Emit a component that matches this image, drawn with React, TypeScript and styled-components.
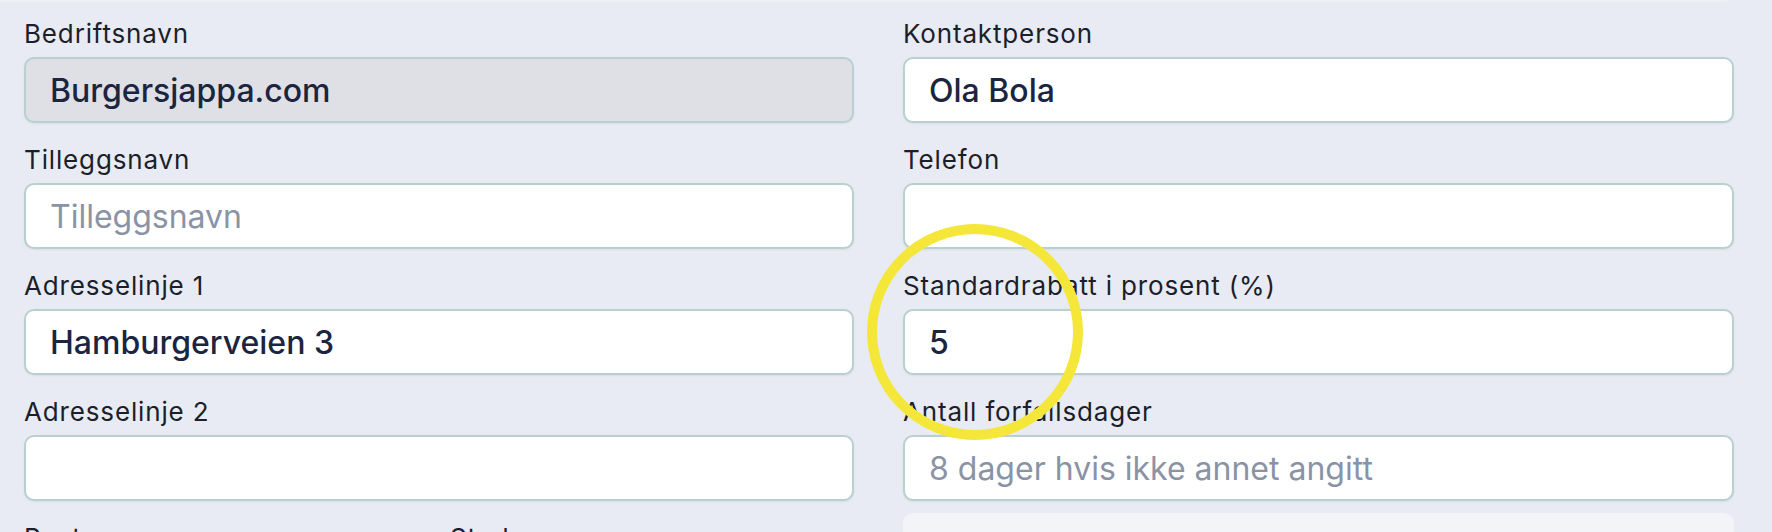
import React from "react";
import styled, { createGlobalStyle } from "styled-components";

const Global = createGlobalStyle`
  html, body { margin: 0; padding: 0; background: #e8ebf3; }
  body { font-family: Inter, "Noto Sans", sans-serif; overflow: hidden; }
`;

const Page = styled.div`
  position: relative;
  width: 1772px;
  height: 532px;
  overflow: hidden;
  background: #e8ebf3;
`;

const TopEdge = styled.div`
  height: 2px;
  margin-right: 45px;
  background: #eef0f6;
`;

const Form = styled.div`
  display: grid;
  grid-template-columns: 830px 831px;
  column-gap: 49px;
  padding: 14px 0 0 24px;
`;

const Column = styled.div`
  display: flex;
  flex-direction: column;
  gap: 19px;
`;

const Field = styled.label`
  display: flex;
  flex-direction: column;
  gap: 5px;
`;

const Label = styled.span`
  font-size: 26px;
  line-height: 36px;
  font-weight: 400;
  letter-spacing: 0.85px;
  color: #1c1f2a;
  white-space: nowrap;
`;

const Input = styled.input<{ $disabled?: boolean }>`
  box-sizing: border-box;
  height: 66px;
  width: 100%;
  border: 2px solid #b9d0ce;
  border-radius: 10px;
  padding: 0 24px;
  font-family: Inter, "Noto Sans", sans-serif;
  font-size: 32px;
  font-weight: 500;
  color: #1b2540;
  background: ${(p) => (p.$disabled ? "#dfe0e5" : "#ffffff")};
  box-shadow: 0 1px 2px rgba(40, 60, 80, 0.08);
  outline: none;
  &::placeholder {
    color: #8a93a6;
    font-weight: 400;
  }
`;

const SplitRow = styled.div`
  display: grid;
  grid-template-columns: 1fr 1fr;
  column-gap: 22px;
`;

const NoteBox = styled.div`
  margin-top: -7px;
  height: 80px;
  border-radius: 10px;
  background: #f3f4f8;
`;

const Highlight = styled.svg`
  position: absolute;
  left: 867px;
  top: 224px;
  width: 216px;
  height: 216px;
  pointer-events: none;
`;

export default function App() {
  return (
    <Page>
      <Global />
      <TopEdge />
      <Form>
        <Column>
          <Field>
            <Label>Bedriftsnavn</Label>
            <Input $disabled readOnly defaultValue="Burgersjappa.com" />
          </Field>
          <Field>
            <Label>Tilleggsnavn</Label>
            <Input placeholder="Tilleggsnavn" />
          </Field>
          <Field>
            <Label>Adresselinje 1</Label>
            <Input defaultValue="Hamburgerveien 3" />
          </Field>
          <Field>
            <Label>Adresselinje 2</Label>
            <Input />
          </Field>
          <SplitRow>
            <Field>
              <Label>Postnummer</Label>
              <Input />
            </Field>
            <Field>
              <Label>Sted</Label>
              <Input />
            </Field>
          </SplitRow>
        </Column>
        <Column>
          <Field>
            <Label>Kontaktperson</Label>
            <Input defaultValue="Ola Bola" />
          </Field>
          <Field>
            <Label>Telefon</Label>
            <Input />
          </Field>
          <Field>
            <Label>Standardrabatt i prosent (%)</Label>
            <Input defaultValue="5" />
          </Field>
          <Field>
            <Label>Antall forfallsdager</Label>
            <Input placeholder="8 dager hvis ikke annet angitt" />
          </Field>
          <NoteBox />
        </Column>
      </Form>
      <Highlight viewBox="0 0 216 216">
        <circle cx="108" cy="108" r="103" fill="none" stroke="#f4e73a" strokeWidth="10" />
      </Highlight>
    </Page>
  );
}
